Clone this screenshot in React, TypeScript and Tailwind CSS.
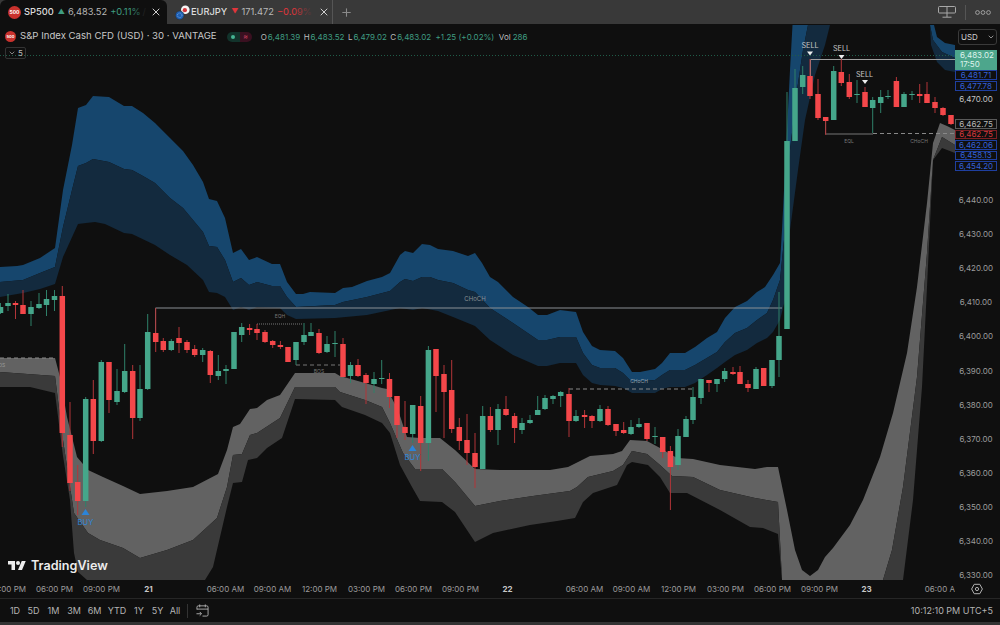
import { ChevronDown, Plus, X } from 'lucide-react'

type Candle = [number, number, number, number, number, 'g' | 'r']

// x, wick top, body top, body bottom, wick bottom, colour
const candles: Candle[] = [
  [0.5, 303, 307, 313, 314, 'g'], [8, 294, 303, 306, 311, 'g'], [15.5, 301, 303, 305, 319, 'r'], [23, 290, 305, 314, 314, 'r'],
  [31, 301, 307, 314, 326, 'g'], [39, 293, 304, 308, 309, 'g'], [46.5, 290, 299, 305, 316, 'g'], [54.5, 290, 296, 300, 311, 'g'],
  [62.3, 286, 296, 433, 447, 'r'], [70, 402, 435, 483, 491, 'r'], [77.7, 465, 482, 501, 515, 'r'], [85.7, 397, 399, 501, 507, 'g'],
  [93.3, 380, 399, 441, 454, 'r'], [101.3, 360, 362, 441, 442, 'g'], [109, 362, 362, 400, 413, 'r'], [117, 369, 391, 402, 405, 'g'],
  [124.7, 344, 371, 392, 393, 'g'], [132.7, 365, 371, 418, 439, 'r'], [140, 365, 389, 418, 421, 'g'], [147.7, 314, 332, 389, 390, 'g'],
  [155.7, 308, 333, 342, 352, 'r'], [163.3, 338, 341, 350, 352, 'r'], [171.3, 339, 341, 350, 351, 'g'], [179, 327, 338, 343, 353, 'r'],
  [187, 340, 342, 350, 353, 'r'], [194.7, 345, 349, 355, 357, 'r'], [202.7, 348, 350, 355, 362, 'g'], [210.3, 350, 351, 375, 383, 'r'],
  [218.3, 355, 371, 376, 380, 'g'], [226, 365, 369, 371, 384, 'g'], [234, 332, 332, 369, 369, 'g'], [241.7, 323, 327, 335, 342, 'g'],
  [249.6, 324, 328, 330, 335, 'r'], [257, 324, 329, 333, 340, 'r'], [265, 330, 332, 342, 343, 'r'], [272.7, 340, 341, 345, 348, 'r'],
  [280.4, 341, 345, 347, 349, 'r'], [288, 347, 347, 362, 362, 'r'], [296, 342, 342, 360, 365, 'g'], [304, 323, 335, 342, 345, 'g'],
  [311, 323, 332, 336, 336, 'g'], [319, 329, 333, 353, 354, 'r'], [327, 336, 344, 352, 353, 'g'], [335, 331, 343, 344, 357, 'g'],
  [343, 338, 344, 377, 377, 'r'], [350.5, 362, 365, 376, 383, 'g'], [358, 359, 365, 376, 377, 'r'], [366, 373, 375, 383, 404, 'r'],
  [374, 372, 379, 384, 393, 'g'], [381.7, 360, 378, 379, 384, 'g'], [389.5, 373, 379, 397, 408, 'r'], [397, 396, 396, 425, 438, 'r'],
  [405, 401, 427, 433, 440, 'r'], [412.7, 405, 405, 434, 443, 'g'], [420.7, 396, 406, 443, 471, 'r'], [428.4, 346, 350, 443, 461, 'g'],
  [436, 349, 349, 376, 412, 'r'], [444, 365, 374, 392, 438, 'r'], [451.7, 360, 390, 429, 433, 'r'], [459.3, 418, 427, 441, 450, 'r'],
  [467, 414, 440, 453, 465, 'r'], [475, 433, 453, 467, 488, 'r'], [482.7, 406, 416, 469, 469, 'g'], [490.4, 407, 416, 430, 432, 'r'],
  [498, 404, 409, 430, 445, 'g'], [506, 396, 409, 415, 416, 'r'], [514.6, 413, 416, 428, 443, 'r'], [522, 418, 423, 430, 434, 'g'],
  [530, 415, 420, 423, 424, 'g'], [537.7, 396, 410, 415, 415, 'g'], [545, 395, 398, 409, 410, 'g'], [553, 395, 396, 399, 404, 'g'],
  [560.7, 391, 392, 396, 407, 'g'], [569, 388, 394, 421, 437, 'r'], [576, 410, 416, 421, 422, 'g'], [584.6, 410, 415, 417, 428, 'r'],
  [592, 415, 416, 421, 428, 'r'], [600, 405, 409, 421, 422, 'g'], [608, 406, 409, 425, 426, 'r'], [616, 424, 424, 431, 436, 'r'],
  [623.7, 422, 430, 433, 434, 'r'], [631, 420, 427, 434, 435, 'g'], [639, 418, 424, 427, 428, 'g'], [647, 423, 423, 439, 441, 'r'],
  [655, 427, 436, 437, 444, 'g'], [662.7, 437, 437, 452, 458, 'r'], [670.4, 446, 451, 467, 510, 'r'], [678, 429, 436, 465, 470, 'g'],
  [686, 416, 419, 437, 437, 'g'], [693, 387, 397, 420, 424, 'g'], [701, 379, 379, 398, 404, 'g'], [709, 380, 380, 383, 392, 'r'],
  [717, 379, 379, 384, 392, 'g'], [724.7, 368, 371, 379, 382, 'g'], [733, 367, 372, 374, 375, 'r'], [740, 366, 372, 384, 384, 'r'],
  [748, 380, 384, 388, 392, 'r'], [756, 367, 369, 389, 389, 'g'], [763.7, 368, 368, 386, 386, 'r'], [772, 360, 360, 386, 388, 'g'],
  [779, 292, 336, 360, 377, 'g'], [787, 92, 141, 329, 329, 'g'], [795, 69, 88, 141, 141, 'g'], [802.7, 66, 75, 87, 94, 'g'],
  [810, 59, 76, 96, 99, 'r'], [818, 79, 94, 118, 120, 'r'], [825.7, 117, 117, 121, 135, 'r'], [833.7, 66, 71, 120, 120, 'g'],
  [841.3, 59, 72, 83, 86, 'r'], [849.3, 74, 82, 97, 99, 'r'], [857, 80, 94, 95, 103, 'g'], [865, 87, 92, 107, 107, 'r'],
  [872.7, 97, 100, 108, 133, 'g'], [880.7, 90, 97, 103, 113, 'g'], [888, 90, 96, 97, 99, 'g'], [896.4, 77, 81, 107, 107, 'r'],
  [904, 92, 94, 107, 107, 'g'], [912, 91, 94, 95, 100, 'g'], [919.7, 84, 94, 96, 103, 'r'], [927, 82, 94, 103, 103, 'r'],
  [935, 97, 102, 108, 113, 'r'], [943, 107, 108, 115, 116, 'r'], [951, 115, 115, 124, 125, 'r'],
]

const blueTop =
  '0,267 17,266 23,265 40,258 55,248 63,190 72,145 78,108 86,105 93,96 109,97 124,106 132,106 143,113 155,123 170,138 183,151 193,165 203,182 209,199 217,201 225,218 233,253 241,249 249,260 257,257 272,264 280,264 287,282 296,294 303,294 310,292 335,293 343,288 352,287 367,281 382,277 390,273 400,255 405,251 413,253 422,244 430,245 438,249 453,251 468,256 475,253 482,263 490,277 498,282 513,297 528,307 538,315 547,315 560,310 576,312 583,332 592,346 600,350 615,351 623,358 632,372 640,372 655,369 662,363 670,353 685,353 695,347 707,338 717,332 725,318 735,307 747,301 757,292 765,287 773,275 780,263 782,230 786,150 790,70 792.5,25'
const blueMid =
  '808,25 803,50 797,90 790,150 784,240 780,280 773,300 767,313 757,320 747,328 735,333 725,342 717,352 695,365 685,370 670,370 662,375 655,380 632,382 623,373 615,368 600,368 592,365 583,353 576,337 560,337 547,340 538,340 513,323 490,308 475,292 468,290 453,283 438,280 430,277 422,277 413,281 405,279 400,282 390,291 367,297 343,302 335,305 296,307 287,297 280,286 272,286 257,282 249,285 241,278 233,282 225,260 217,247 209,246 203,232 193,220 183,208 170,198 155,183 143,176 132,170 124,169 109,162 93,159 86,163 78,166 72,190 63,227 55,267 40,273 23,280 0,282'
const blueLow =
  '0,297 23,293 40,289 55,284 63,257 78,224 86,223 95,222 105,224 124,233 132,234 155,245 170,255 187,265 203,280 209,292 217,293 225,297 233,310 241,307 249,310 257,307 280,308 287,315 296,319 335,318 367,315 400,308 413,310 422,308 438,311 453,317 475,326 490,340 513,355 538,366 547,366 560,363 576,363 583,375 592,383 600,385 615,386 623,388 632,393 655,393 662,389 670,387 685,387 695,383 707,375 717,368 725,362 735,355 747,350 757,343 767,338 773,332 780,320 785,300 790,230 798,170 805,120 815,75 825,45 830,25'

const grayTop =
  '0,358 55,358 60,377 67,417 77,457 88,470 103,477 123,486 140,494 167,491 193,487 218,474 227,450 233,427 240,424 250,409 257,408 267,400 280,395 295,373 335,373 340,376 365,383 382,388 387,389 398,410 407,437 420,438 440,438 455,450 475,469 500,470 550,470 568,467 582,460 590,456 613,454 622,451 630,440 647,441 660,448 677,458 693,459 720,465 755,469 767,467 778,467 787,510 795,550 802,570 810,576 818,570 825,557 833,548 850,525 863,500 880,457 893,413 907,353 917,287 927,203 933,143 940,123 947,126 955,130'
const grayMid =
  '955,145 942,137 933,160 927,253 917,377 903,487 892,550 883,580 782,580 780,540 778,502 755,498 720,490 693,477 672,476 660,465 647,454 632,451 623,465 613,471 588,477 577,487 570,491 533,496 500,501 475,506 455,482 442,469 420,469 415,469 403,453 390,423 382,407 365,400 340,392 335,387 295,387 280,418 257,433 250,435 242,454 233,455 227,487 217,518 193,540 167,550 140,558 123,548 100,540 88,533 74,513 68,473 63,440 55,376 0,372'
const grayLow =
  '0,387 30,387 55,393 63,456 70,500 74,553 78,572 87,580 205,580 213,567 220,537 227,507 233,483 242,482 248,460 257,458 267,448 282,438 295,399 335,400 342,407 365,415 382,423 390,433 400,465 412,487 420,501 442,502 455,512 467,530 475,542 493,533 530,525 557,521 575,518 583,502 593,493 617,485 627,465 632,462 648,465 660,477 670,493 687,493 720,510 750,527 763,528 778,534 782,580 903,580 913,500 922,387 927,287 933,160 942,148 955,153'

const boxes = {
  blue: 'border-[#1f3f9f] text-[#3460d8]',
  gray: 'border-[#5a5a5a] text-[#b8b8b8]',
  red: 'border-[#7c1f24] text-[#d8383c]',
}

const scale = ['6,440.00', '6,430.00', '6,420.00', '6,410.00', '6,400.00', '6,390.00', '6,380.00', '6,370.00', '6,360.00', '6,350.00', '6,340.00', '6,330.00']

const times = [
  '03:00 PM', '06:00 PM', '09:00 PM', '21', '', '06:00 AM', '09:00 AM', '12:00 PM', '03:00 PM', '06:00 PM', '09:00 PM', '22', '',
  '06:00 AM', '09:00 AM', '12:00 PM', '03:00 PM', '06:00 PM', '09:00 PM', '23', '', '06:00 AM',
]

const ranges = [
  ['1D', 'w-[18px]'], ['5D', 'w-[19px]'], ['1M', 'w-[21px]'], ['3M', 'w-[20px]'], ['6M', 'w-[21px]'],
  ['YTD', 'w-[24px]'], ['1Y', 'w-[20px]'], ['5Y', 'w-[17px]'], ['All', 'w-[18px]'],
]

function SpxBadge({ size }: { size: string }) {
  return (
    <span className={`flex shrink-0 items-center justify-center rounded-full bg-[#c9322d] font-bold leading-none text-white ${size}`}>
      500
    </span>
  )
}

function Tabs() {
  return (
    <div className="flex h-[24px] shrink-0 items-center bg-[#393939] text-[9.3px] font-medium">
      <div className="relative flex h-full w-[167px] items-center rounded-t-[6px] bg-[#0f0f0f] pl-[8px]">
        <SpxBadge size="h-[13px] w-[13px] text-[5px]" />
        <span className="ml-[3px] text-[#dcdcdc]">SP500</span>
        <span className="ml-[4px] text-[7px] text-[#3f9d82]">▲</span>
        <span className="ml-[3px] font-normal text-[#b8b8b8]">6,483.52</span>
        <span className="ml-[3px] font-normal text-[#3f9d82]">+0.11%</span>
        <span className="ml-[2px] text-[#444]">/</span>
        <span className="absolute left-[130px] top-0 h-full w-[20px] bg-gradient-to-r from-transparent to-[#0f0f0f]" />
        <X className="absolute left-[150px] top-[6px] h-[12px] w-[12px] text-[#cfcfcf]" />
      </div>
      <div className="relative flex h-full w-[166px] items-center border-r border-[#555] pl-[8px]">
        <svg viewBox="0 0 16 16" className="h-[15px] w-[15px] shrink-0">
          <circle cx="11" cy="5" r="4.6" fill="#f4f4f4" />
          <circle cx="10.5" cy="5.5" r="2.3" fill="#d6373c" />
          <circle cx="5" cy="11" r="4.6" fill="#1d5fb4" stroke="#2f2f2f" strokeWidth="0.6" />
          <circle cx="5" cy="11" r="2.4" fill="none" stroke="#8ab2e0" strokeWidth="0.9" strokeDasharray="0.9 0.9" />
        </svg>
        <span className="ml-[1px] text-[#dcdcdc]">EURJPY</span>
        <span className="ml-[4px] text-[7px] text-[#e0353b]">▼</span>
        <span className="ml-[3px] font-normal text-[#b8b8b8]">171.472</span>
        <span className="ml-[3px] font-normal text-[#e0353b]">−0.09%</span>
        <span className="absolute left-[126px] top-0 h-full w-[20px] bg-gradient-to-r from-transparent to-[#393939]" />
        <X className="absolute left-[151px] top-[6px] h-[12px] w-[12px] text-[#cfcfcf]" />
      </div>
      <Plus className="ml-[7px] h-[13px] w-[13px] text-[#8a8a8a]" />
      <div className="ml-auto flex items-center">
        <svg viewBox="0 0 18 12" className="h-[12px] w-[18px] text-[#a8a8a8]" fill="none" stroke="currentColor" strokeWidth="1">
          <rect x="0.5" y="0.5" width="17" height="6.5" rx="1" />
          <path d="M9 0.5V11M4.5 11.2h9" />
        </svg>
        <span className="mx-[9px] h-[15px] w-px bg-[#555]" />
        <svg viewBox="0 0 16 5" className="mr-[9px] h-[5px] w-[16px] text-[#a8a8a8]" fill="none" stroke="currentColor" strokeWidth="0.9">
          <circle cx="2.5" cy="2.5" r="1.9" />
          <circle cx="8" cy="2.5" r="1.9" />
          <circle cx="13.5" cy="2.5" r="1.9" />
        </svg>
      </div>
    </div>
  )
}

function Legend() {
  return (
    <div className="absolute left-0 top-0 text-[#bdbdbd]">
      <div className="ml-[5px] mt-[6px] flex h-[13px] items-center whitespace-nowrap">
        <SpxBadge size="h-[11px] w-[11px] text-[4px]" />
        <span className="ml-[4px] text-[9.6px] text-[#c8c8c8]">S&amp;P Index Cash CFD (USD) · 30 · VANTAGE</span>
        <span className="ml-[10px] flex h-[10px] w-[25px] overflow-hidden rounded-full">
          <span className="flex w-[13px] items-center justify-center bg-[#12332b]">
            <span className="h-[4px] w-[4px] rounded-full bg-[#45b493]" />
          </span>
          <span className="flex flex-1 items-center justify-center bg-[#3a1020] text-[7px] leading-none text-[#e04a6a]">≈</span>
        </span>
        <span className="ml-[9px] flex gap-[3.5px] text-[8px]">
          <span>O<span className="ml-[1px] text-[#3f9d82]">6,481.39</span></span>
          <span>H<span className="ml-[1px] text-[#3f9d82]">6,483.52</span></span>
          <span>L<span className="ml-[1px] text-[#3f9d82]">6,479.02</span></span>
          <span>C<span className="ml-[1px] text-[#3f9d82]">6,483.02</span></span>
          <span className="ml-[1px] text-[#3f9d82]">+1.25 (+0.02%)</span>
          <span className="ml-[1px]">Vol<span className="ml-[2px] text-[#3f9d82]">286</span></span>
        </span>
      </div>
      <div className="ml-[5px] mt-[3.5px] flex h-[12px] w-[21px] items-center justify-center gap-[2px] rounded-[2px] border border-[#333] text-[8px] leading-none">
        <ChevronDown className="h-[8px] w-[8px]" />
        5
      </div>
    </div>
  )
}

function Chart() {
  return (
    <div className="relative h-[556px] w-[955px] shrink-0 overflow-hidden">
      <svg viewBox="0 24 955 556" className="block h-[556px] w-[955px] font-['Inter',sans-serif]">
        <polygon points={`${blueTop} ${blueMid}`} fill="#16466d" />
        <polygon points={`${blueMid.split(' ').reverse().join(' ')} ${blueLow.split(' ').reverse().join(' ')}`} fill="#132a3e" />
        <polygon points="930,25 933,40 942,52 955,58 955,45 945,43 937,37 934,25" fill="#16466d" />
        <polygon points="930,25 933,40 942,52 955,58 955,72 945,70 937,62 931,45" fill="#132a3e" />
        <polygon points={`${grayTop} ${grayMid}`} fill="#626262" />
        <polygon points={`${grayMid.split(' ').reverse().join(' ')} ${grayLow.split(' ').reverse().join(' ')}`} fill="#3a3a3a" />

        <line x1="0" x2="955" y1="55.5" y2="55.5" stroke="#1f5c48" strokeDasharray="1 2" />
        <path d="M155.5 342V308H782" fill="none" stroke="#8a8f94" />
        <path d="M810.5 76V59.5H955" fill="none" stroke="#a0a0a0" />
        <path d="M825.5 120V134H873" fill="none" stroke="#777" />
        <line x1="873" x2="955" y1="133.5" y2="133.5" stroke="#888" strokeDasharray="4 3" />
        <line x1="0" x2="55" y1="358" y2="358" stroke="#8a8a8a" strokeDasharray="4 3" />
        <line x1="257" x2="303" y1="324" y2="324" stroke="#777" strokeDasharray="1 1" />
        <line x1="296" x2="340" y1="365" y2="365" stroke="#777" strokeDasharray="4 3" />
        <line x1="569" x2="693" y1="389" y2="389" stroke="#888" strokeDasharray="4 3" />

        {candles.map(([x, wt, bt, bb, wb, c]) => (
          <g key={x}>
            <line x1={x} x2={x} y1={wt} y2={wb} stroke={c === 'g' ? '#2f8069' : '#b23539'} />
            <rect x={x - 2.75} y={bt} width="5.5" height={Math.max(bb - bt, 1)} fill={c === 'g' ? '#45a68a' : '#f4474a'} />
          </g>
        ))}

        <text x="475" y="300.5" textAnchor="middle" className="fill-[#8a8f94] text-[6px]">CHoCH</text>
        <text x="639" y="383" textAnchor="middle" className="fill-[#9aa4ac] text-[5px]">CHoCH</text>
        <text x="280" y="318" textAnchor="middle" className="fill-[#777] text-[5px]">EQH</text>
        <text x="319" y="373" textAnchor="middle" className="fill-[#777] text-[5px]">BOS</text>
        <text x="-5" y="367" className="fill-[#999] text-[5px]">BOS</text>
        <text x="849" y="143" textAnchor="middle" className="fill-[#777] text-[5px]">EQL</text>
        <text x="919" y="143" textAnchor="middle" className="fill-[#777] text-[5px]">CHoCH</text>

        <polygon points="85.5,509 81.5,515 89.5,515" fill="#2b84d8" />
        <text x="85.5" y="524.5" textAnchor="middle" className="fill-[#2f86d8] text-[7.7px]">BUY</text>
        <polygon points="412.5,445 408.5,451 416.5,451" fill="#2b84d8" />
        <text x="412.5" y="460" textAnchor="middle" className="fill-[#2f86d8] text-[7.7px]">BUY</text>

        <text x="810" y="48" textAnchor="middle" className="fill-[#c8c8c8] text-[7.2px]">SELL</text>
        <polygon points="807,51.5 813,51.5 810,55.5" fill="#eee" />
        <text x="841.5" y="51" textAnchor="middle" className="fill-[#c8c8c8] text-[7.2px]">SELL</text>
        <polygon points="838.5,55 844.5,55 841.5,59" fill="#eee" />
        <text x="864.5" y="76.5" textAnchor="middle" className="fill-[#c8c8c8] text-[7.2px]">SELL</text>
        <polygon points="862,80 868,80 865,84" fill="#eee" />
      </svg>
      <Legend />
      <div className="absolute bottom-[7px] left-[8px] flex items-center gap-[5px] text-[#ececec]">
        <svg viewBox="0 0 36 28" className="h-[14px] w-[18px]" fill="currentColor">
          <path d="M14 22H7V11H0V4h14v18zM28 22h-8l7.5-18h8L28 22z" />
          <circle cx="20" cy="8" r="4" />
        </svg>
        <span className="text-[12.6px] font-semibold leading-none">TradingView</span>
      </div>
    </div>
  )
}

function PriceBox({ tone, value, height }: { tone: keyof typeof boxes; value: string; height: string }) {
  return (
    <div className={`mb-px flex items-center justify-center border bg-[#0f0f0f] leading-none ${height} ${boxes[tone]}`}>
      {value}
    </div>
  )
}

function PriceAxis() {
  return (
    <div className="h-[556px] w-[45px] shrink-0 pr-[3px] text-[8px] text-[#9c9c9c]">
      <div className="ml-[3px] mt-[5px] flex h-[16px] w-[39px] items-center justify-between rounded-[3px] border border-[#3a3a3a] pl-[2px] pr-px text-[8px] text-[#cfcfcf]">
        USD
        <ChevronDown className="h-[8px] w-[8px]" />
      </div>
      <div className="mt-[5px] flex h-[20px] flex-col justify-center bg-[#4da68c] pl-[5px] leading-[9px] text-[#dff3ec]">
        <span>6,483.02</span>
        <span>17:50</span>
      </div>
      <PriceBox tone="blue" height="h-[10px]" value="6,481.71" />
      <PriceBox tone="blue" height="h-[10px]" value="6,477.78" />
      <div className="flex h-[13px] items-center justify-center text-[#c4c4c4]">6,470.00</div>
      <div className="mt-[14px]">
        <PriceBox tone="gray" height="h-[9.5px]" value="6,462.75" />
        <PriceBox tone="red" height="h-[9.5px]" value="6,462.75" />
        <PriceBox tone="blue" height="h-[9.5px]" value="6,462.06" />
        <PriceBox tone="blue" height="h-[9.5px]" value="6,458.13" />
        <PriceBox tone="blue" height="h-[9.5px]" value="6,454.20" />
      </div>
      <div className="mt-[12.5px]">
        {scale.map((p) => (
          <div key={p} className="flex h-[34.1px] items-center justify-center">{p}</div>
        ))}
      </div>
    </div>
  )
}

function TimeAxis() {
  return (
    <div className="flex h-[18px] shrink-0 items-center text-[8px] text-[#9c9c9c]">
      <div className="flex w-[955px] shrink-0 overflow-hidden">
        <div className="ml-[-16px] flex">
          {times.map((t, i) =>
            t === '' ? (
              <span key={i} className="w-[30px] shrink-0" />
            ) : (
              <span key={i} className={`w-[47px] shrink-0 text-center ${t.length === 2 ? 'font-bold text-[#c8c8c8]' : ''}`}>
                {t}
              </span>
            ),
          )}
        </div>
      </div>
      <svg viewBox="0 0 12 12" className="ml-[16px] h-[12px] w-[12px]" fill="none" stroke="#b0b0b0">
        <path d="M3.2 1.3h5.6L11.4 6 8.8 10.7H3.2L.6 6z" />
        <circle cx="6" cy="6" r="1.6" />
      </svg>
    </div>
  )
}

function BottomBar() {
  return (
    <div className="flex h-[24px] shrink-0 items-center border-t border-[#262626] pl-[6px] pr-[7px] text-[9px] text-[#b4b4b4]">
      {ranges.map(([label, width]) => (
        <span key={label} className={`text-center ${width}`}>{label}</span>
      ))}
      <span className="ml-[3px] h-[14px] w-px bg-[#333]" />
      <svg viewBox="0 0 14 14" className="ml-[8px] h-[13px] w-[13px]" fill="none" stroke="#b0b0b0" strokeWidth="1">
        <path d="M1 6V3.5A1.5 1.5 0 0 1 2.5 2h9A1.5 1.5 0 0 1 13 3.5v8a1.5 1.5 0 0 1-1.5 1.5H7M1 5.5h12M4 .5v3M10 .5v3M.5 10.5h5M4 8.5l2 2-2 2" />
      </svg>
      <span className="ml-auto">10:12:10 PM UTC+5</span>
    </div>
  )
}

export default function App() {
  return (
    <div className="flex h-[625px] w-[1000px] flex-col overflow-hidden bg-[#0f0f0f] font-['Inter',sans-serif]">
      <Tabs />
      <div className="flex h-[556px] shrink-0">
        <Chart />
        <PriceAxis />
      </div>
      <TimeAxis />
      <BottomBar />
      <div className="h-[3px] shrink-0 bg-[#333]" />
    </div>
  )
}
